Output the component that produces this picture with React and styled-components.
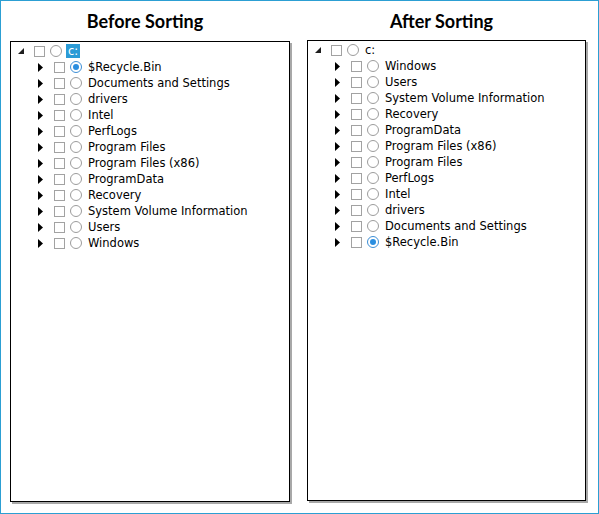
import React from 'react';
import styled, { createGlobalStyle } from 'styled-components';

const GlobalStyle = createGlobalStyle`
  body {
    margin: 0;
    background: #fff;
  }
`;

const Window = styled.div`
  box-sizing: border-box;
  width: 599px;
  height: 514px;
  border: 1px solid #2c9fd3;
  background: #fff;
  padding-left: 9px;
  display: grid;
  grid-template-columns: 280px 279px;
  column-gap: 17px;
  align-content: start;
`;

const Column = styled.div`
  display: flex;
  flex-direction: column;
`;

const Title = styled.div`
  height: 40px;
  line-height: 40px;
  padding-right: 10px;
  text-align: center;
  font-family: Lato, "Open Sans", sans-serif;
  font-weight: 700;
  font-size: 18px;
  color: #000;
`;

const Panel = styled.div`
  box-sizing: border-box;
  height: 461px;
  margin-top: ${p => (p.$lift ? '-1px' : '0')};
  border: 1px solid #000;
  box-shadow: 2px 2px 0 #a8a8a8;
  padding-top: 1px;
  background: #fff;
`;

const Row = styled.div`
  display: flex;
  align-items: center;
  height: 16px;
  padding-left: ${p => 7 + p.$level * 20}px;
  font-family: "DejaVu Sans", Verdana, sans-serif;
  font-size: 11.5px;
  color: #000;
  white-space: nowrap;
`;

const Expander = styled.span`
  width: 16px;
  height: 16px;
  display: flex;
  align-items: center;
  flex-shrink: 0;
`;

const CheckBox = styled.span`
  box-sizing: border-box;
  width: 11px;
  height: 11px;
  border: 1px solid #a2a2a2;
  background: #fff;
  margin-right: 5px;
  flex-shrink: 0;
`;

const Radio = styled.span`
  box-sizing: border-box;
  width: 12px;
  height: 12px;
  border-radius: 50%;
  border: 1px solid ${p => (p.$checked ? '#3d8fd6' : '#9c9c9c')};
  background: #fff;
  margin-right: 4px;
  display: flex;
  align-items: center;
  justify-content: center;
  flex-shrink: 0;
`;

const Dot = styled.span`
  width: 6px;
  height: 6px;
  border-radius: 50%;
  background: #2a8ee0;
`;

const Label = styled.span`
  padding: 0 2px;
  line-height: 14px;
  background: ${p => (p.$selected ? '#2b9bd6' : 'transparent')};
  color: ${p => (p.$selected ? '#fff' : '#000')};
`;

const folders = [
  '$Recycle.Bin',
  'Documents and Settings',
  'drivers',
  'Intel',
  'PerfLogs',
  'Program Files',
  'Program Files (x86)',
  'ProgramData',
  'Recovery',
  'System Volume Information',
  'Users',
  'Windows',
];

const Arrow = ({ open }) =>
  open ? (
    <svg width="6" height="6" viewBox="0 0 6 6" style={{ marginTop: -1 }}>
      <polygon points="6,0 6,6 0,6" fill="#1e1e1e" />
    </svg>
  ) : (
    <svg width="5" height="9" viewBox="0 0 5 9">
      <polygon points="0,0 5,4.5 0,9" fill="#000" />
    </svg>
  );

const TreeRow = ({ level, open, text, checked, selected }) => (
  <Row $level={level}>
    <Expander>
      <Arrow open={open} />
    </Expander>
    <CheckBox />
    <Radio $checked={checked}>{checked && <Dot />}</Radio>
    <Label $selected={selected}>{text}</Label>
  </Row>
);

const Tree = ({ items, rootSelected, lift }) => (
  <Panel $lift={lift}>
    <TreeRow level={0} open text="c:" selected={rootSelected} />
    {items.map(name => (
      <TreeRow key={name} level={1} text={name} checked={name === '$Recycle.Bin'} />
    ))}
  </Panel>
);

export default function App() {
  const sorted = [...folders].sort((a, b) =>
    b.toLowerCase() < a.toLowerCase() ? -1 : 1
  );
  return (
    <>
      <GlobalStyle />
      <Window>
        <Column>
          <Title>Before Sorting</Title>
          <Tree items={folders} rootSelected />
        </Column>
        <Column>
          <Title>After Sorting</Title>
          <Tree items={sorted} lift />
        </Column>
      </Window>
    </>
  );
}
